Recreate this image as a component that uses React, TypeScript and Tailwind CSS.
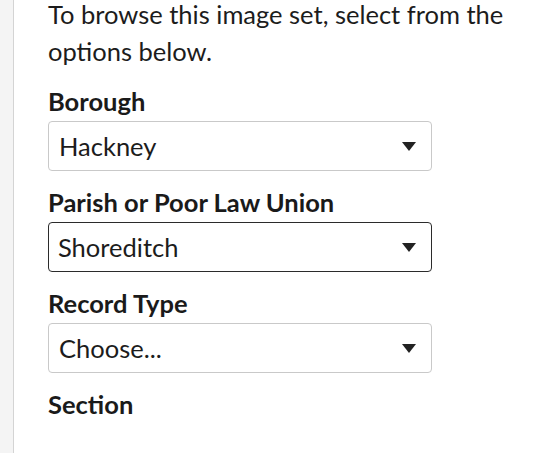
import React from "react"

type Field = {
    label: string;
    value: string;
    active?: boolean;
}

const fields: Field[] = [
    { label: "Borough", value: "Hackney" },
    { label: "Parish or Poor Law Union", value: "Shoreditch", active: true },
    { label: "Record Type", value: "Choose..." },
]

function Caret() {
    return (
        <svg width="14" height="9" viewBox="0 0 14 9" className="shrink-0">
            <path d="M0 0 L14 0 L7 9 Z" fill="#222" />
        </svg>
    )
}

function FakeSelect({ value, active }: { value: string; active?: boolean }) {
    return (
        <div
            className={
                active
                    ? "flex h-[50px] w-[384px] items-center justify-between rounded-[4px] border-[1.5px] border-[#2b2b2b] bg-white pl-[9px] pr-[15px]"
                    : "flex h-[50px] w-[384px] items-center justify-between rounded-[4px] border border-[#c9c9c9] bg-white pl-[10px] pr-[15px]"
            }
        >
            <span className="text-[25.5px] text-[#1c1c1c]">{value}</span>
            <Caret />
        </div>
    )
}

export default function App() {
    return (
        <div className="flex h-[453px] w-[540px] overflow-hidden bg-white" style={{ fontFamily: "Lato, 'Noto Sans', sans-serif" }}>
            <div className="w-[14px] shrink-0 border-r border-[#d4d4d4] bg-[#f4f4f4]" />
            <div className="flex flex-col pl-[34px]">
                <p className="mt-[-4px] text-[25.5px] leading-[37px] text-[#1c1c1c]">
                    To browse this image set, select from the options below.
                </p>
                {fields.map((f) => (
                    <div key={f.label} className="mt-[16px] flex flex-col">
                        <label className="mb-[5px] text-[25.5px] font-bold leading-[30px] text-[#1a1a1a]">{f.label}</label>
                        <FakeSelect value={f.value} active={f.active} />
                    </div>
                ))}
                <div className="mt-[16px] text-[25.5px] font-bold leading-[30px] text-[#1a1a1a]">Section</div>
            </div>
        </div>
    )
}
